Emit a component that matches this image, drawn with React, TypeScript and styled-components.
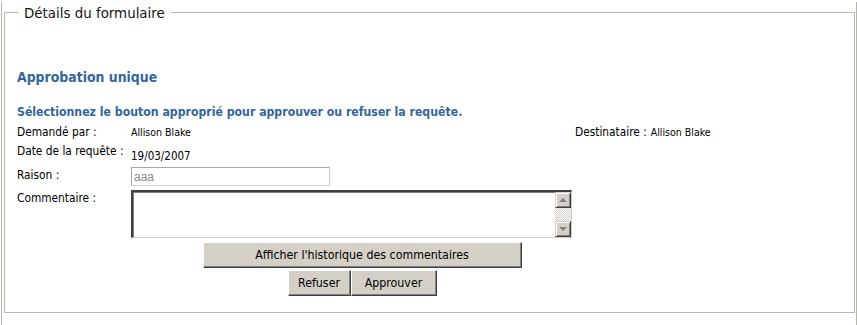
import React from 'react'
import styled, { createGlobalStyle } from 'styled-components'

const GlobalStyle = createGlobalStyle`
  body {
    margin: 0;
    background: #ffffff;
    font-family: 'DejaVu Sans Condensed', 'DejaVu Sans', sans-serif;
  }
`

const FACE = `'DejaVu Sans Condensed', 'DejaVu Sans', sans-serif`

export default function App() {
  return (
    <>
      <GlobalStyle />
      <Outer>
        <Fieldset>
          <Legend>Détails du formulaire</Legend>
          <Body>
            <Title>Approbation unique</Title>
            <Instruction>Sélectionnez le bouton approprié pour approuver ou refuser la requête.</Instruction>
            <FormGrid>
              <Label>Demandé par :</Label>
              <Value>Allison Blake</Value>
              <Recipient>
                <Label>Destinataire :</Label>
                <Value>Allison Blake</Value>
              </Recipient>

              <Label>Date de la requête :</Label>
              <Value $low>19/03/2007</Value>
              <span />

              <Label>Raison :</Label>
              <ReasonInput value="aaa" readOnly />
              <span />

              <Label>Commentaire :</Label>
              <CommentBox>
                <CommentArea />
                <ScrollBar>
                  <ScrollButton $dir="up" />
                  <ScrollTrack />
                  <ScrollButton $dir="down" />
                </ScrollBar>
              </CommentBox>
              <span />
            </FormGrid>
            <Actions>
              <Button $w={319}>Afficher l'historique des commentaires</Button>
              <ButtonRow>
                <Button $w={63}>Refuser</Button>
                <Button $w={86}>Approuver</Button>
              </ButtonRow>
            </Actions>
          </Body>
        </Fieldset>
      </Outer>
    </>
  )
}

const Outer = styled.div`
  box-sizing: border-box;
  margin-left: 1px;
  width: 856px;
  height: 324px;
  border: 1px solid #b4b4ac;
  border-top: 0;
`
const Fieldset = styled.fieldset`
  box-sizing: border-box;
  margin: 2px 0 0 2px;
  padding: 0 0 16px;
  width: 851px;
  border: 1px solid #b8b8b0;
`
const Legend = styled.legend`
  margin-left: 13px;
  padding: 2px 6px 0;
  font-family: ${FACE};
  font-size: 14.9px;
  line-height: 18px;
  color: #141414;
`
const Body = styled.div`
  padding: 0 12px;
`
const Title = styled.h2`
  margin: 46px 0 0;
  font-family: ${FACE};
  font-size: 13.9px;
  line-height: 18px;
  font-weight: bold;
  color: #336699;
`
const Instruction = styled.p`
  margin: 18px 0 0;
  font-family: ${FACE};
  font-size: 12.2px;
  line-height: 16px;
  font-weight: bold;
  color: #336699;
`
const FormGrid = styled.div`
  display: grid;
  grid-template-columns: 114px 444px auto;
  grid-template-rows: 15px 20px 19px 48px;
  row-gap: 4px;
  align-items: start;
  margin-top: 4px;
`
const Label = styled.span`
  font-family: ${FACE};
  font-size: 11.8px;
  line-height: 16px;
  color: #000000;
  white-space: nowrap;
`
const Value = styled.span<{ $low?: boolean }>`
  font-family: ${FACE};
  font-size: ${({ $low }) => ($low ? '11.5px' : '10.5px')};
  line-height: 16px;
  color: #000000;
  padding-top: ${({ $low }) => ($low ? '5px' : '0')};
  white-space: nowrap;
`
const Recipient = styled.div`
  display: flex;
  gap: 4px;
`
const ReasonInput = styled.input`
  box-sizing: border-box;
  width: 199px;
  height: 19px;
  margin: 0;
  padding: 0 2px;
  border: 1px solid;
  border-color: #a7a6aa #d4d0c8 #d4d0c8 #a7a6aa;
  font-family: 'Liberation Sans', Arial, sans-serif;
  font-size: 12px;
  color: #8a8a8a;
  background: #ffffff;
  outline: none;
`
const CommentBox = styled.div`
  box-sizing: border-box;
  display: flex;
  width: 441px;
  height: 48px;
  border-style: solid;
  border-width: 2px 1px 1px 2px;
  border-color: #404040 #d4d0c8 #d4d0c8 #404040;
  box-shadow: inset 1px 1px 0 #808080;
  background: #ffffff;
`
const CommentArea = styled.textarea`
  flex: 1;
  margin: 0;
  padding: 2px;
  border: 0;
  resize: none;
  outline: none;
  background: transparent;
`
const ScrollBar = styled.div`
  display: flex;
  flex-direction: column;
  width: 16px;
`
const ScrollButton = styled.div<{ $dir: 'up' | 'down' }>`
  box-sizing: border-box;
  display: flex;
  align-items: center;
  justify-content: center;
  width: 16px;
  height: 16px;
  background: #d4d0c8;
  border-style: solid;
  border-width: 1px;
  border-color: #d4d0c8 #404040 #404040 #d4d0c8;
  box-shadow: inset 1px 1px 0 #ffffff, inset -1px -1px 0 #808080;

  &::after {
    content: '';
    width: 0;
    height: 0;
    border-left: 4px solid transparent;
    border-right: 4px solid transparent;
    ${({ $dir }) =>
      $dir === 'up' ? 'border-bottom: 4px solid #808080;' : 'border-top: 4px solid #808080;'}
  }
`
const ScrollTrack = styled.div`
  flex: 1;
  background: repeating-conic-gradient(#d4d0c8 0 25%, #ffffff 0 50%) 0 0 / 2px 2px;
`
const Actions = styled.div`
  display: flex;
  flex-direction: column;
  align-items: center;
  gap: 2px;
  width: 690px;
  margin-top: 4px;
`
const ButtonRow = styled.div`
  display: flex;
`
const Button = styled.button<{ $w: number }>`
  box-sizing: border-box;
  width: ${({ $w }) => $w}px;
  height: 26px;
  margin: 0;
  padding: 0;
  background: #d4d0c8;
  border-style: solid;
  border-width: 1px;
  border-color: #ffffff #404040 #404040 #ffffff;
  box-shadow: inset -1px -1px 0 #808080;
  font-family: ${FACE};
  font-size: 12.3px;
  color: #000000;
`
